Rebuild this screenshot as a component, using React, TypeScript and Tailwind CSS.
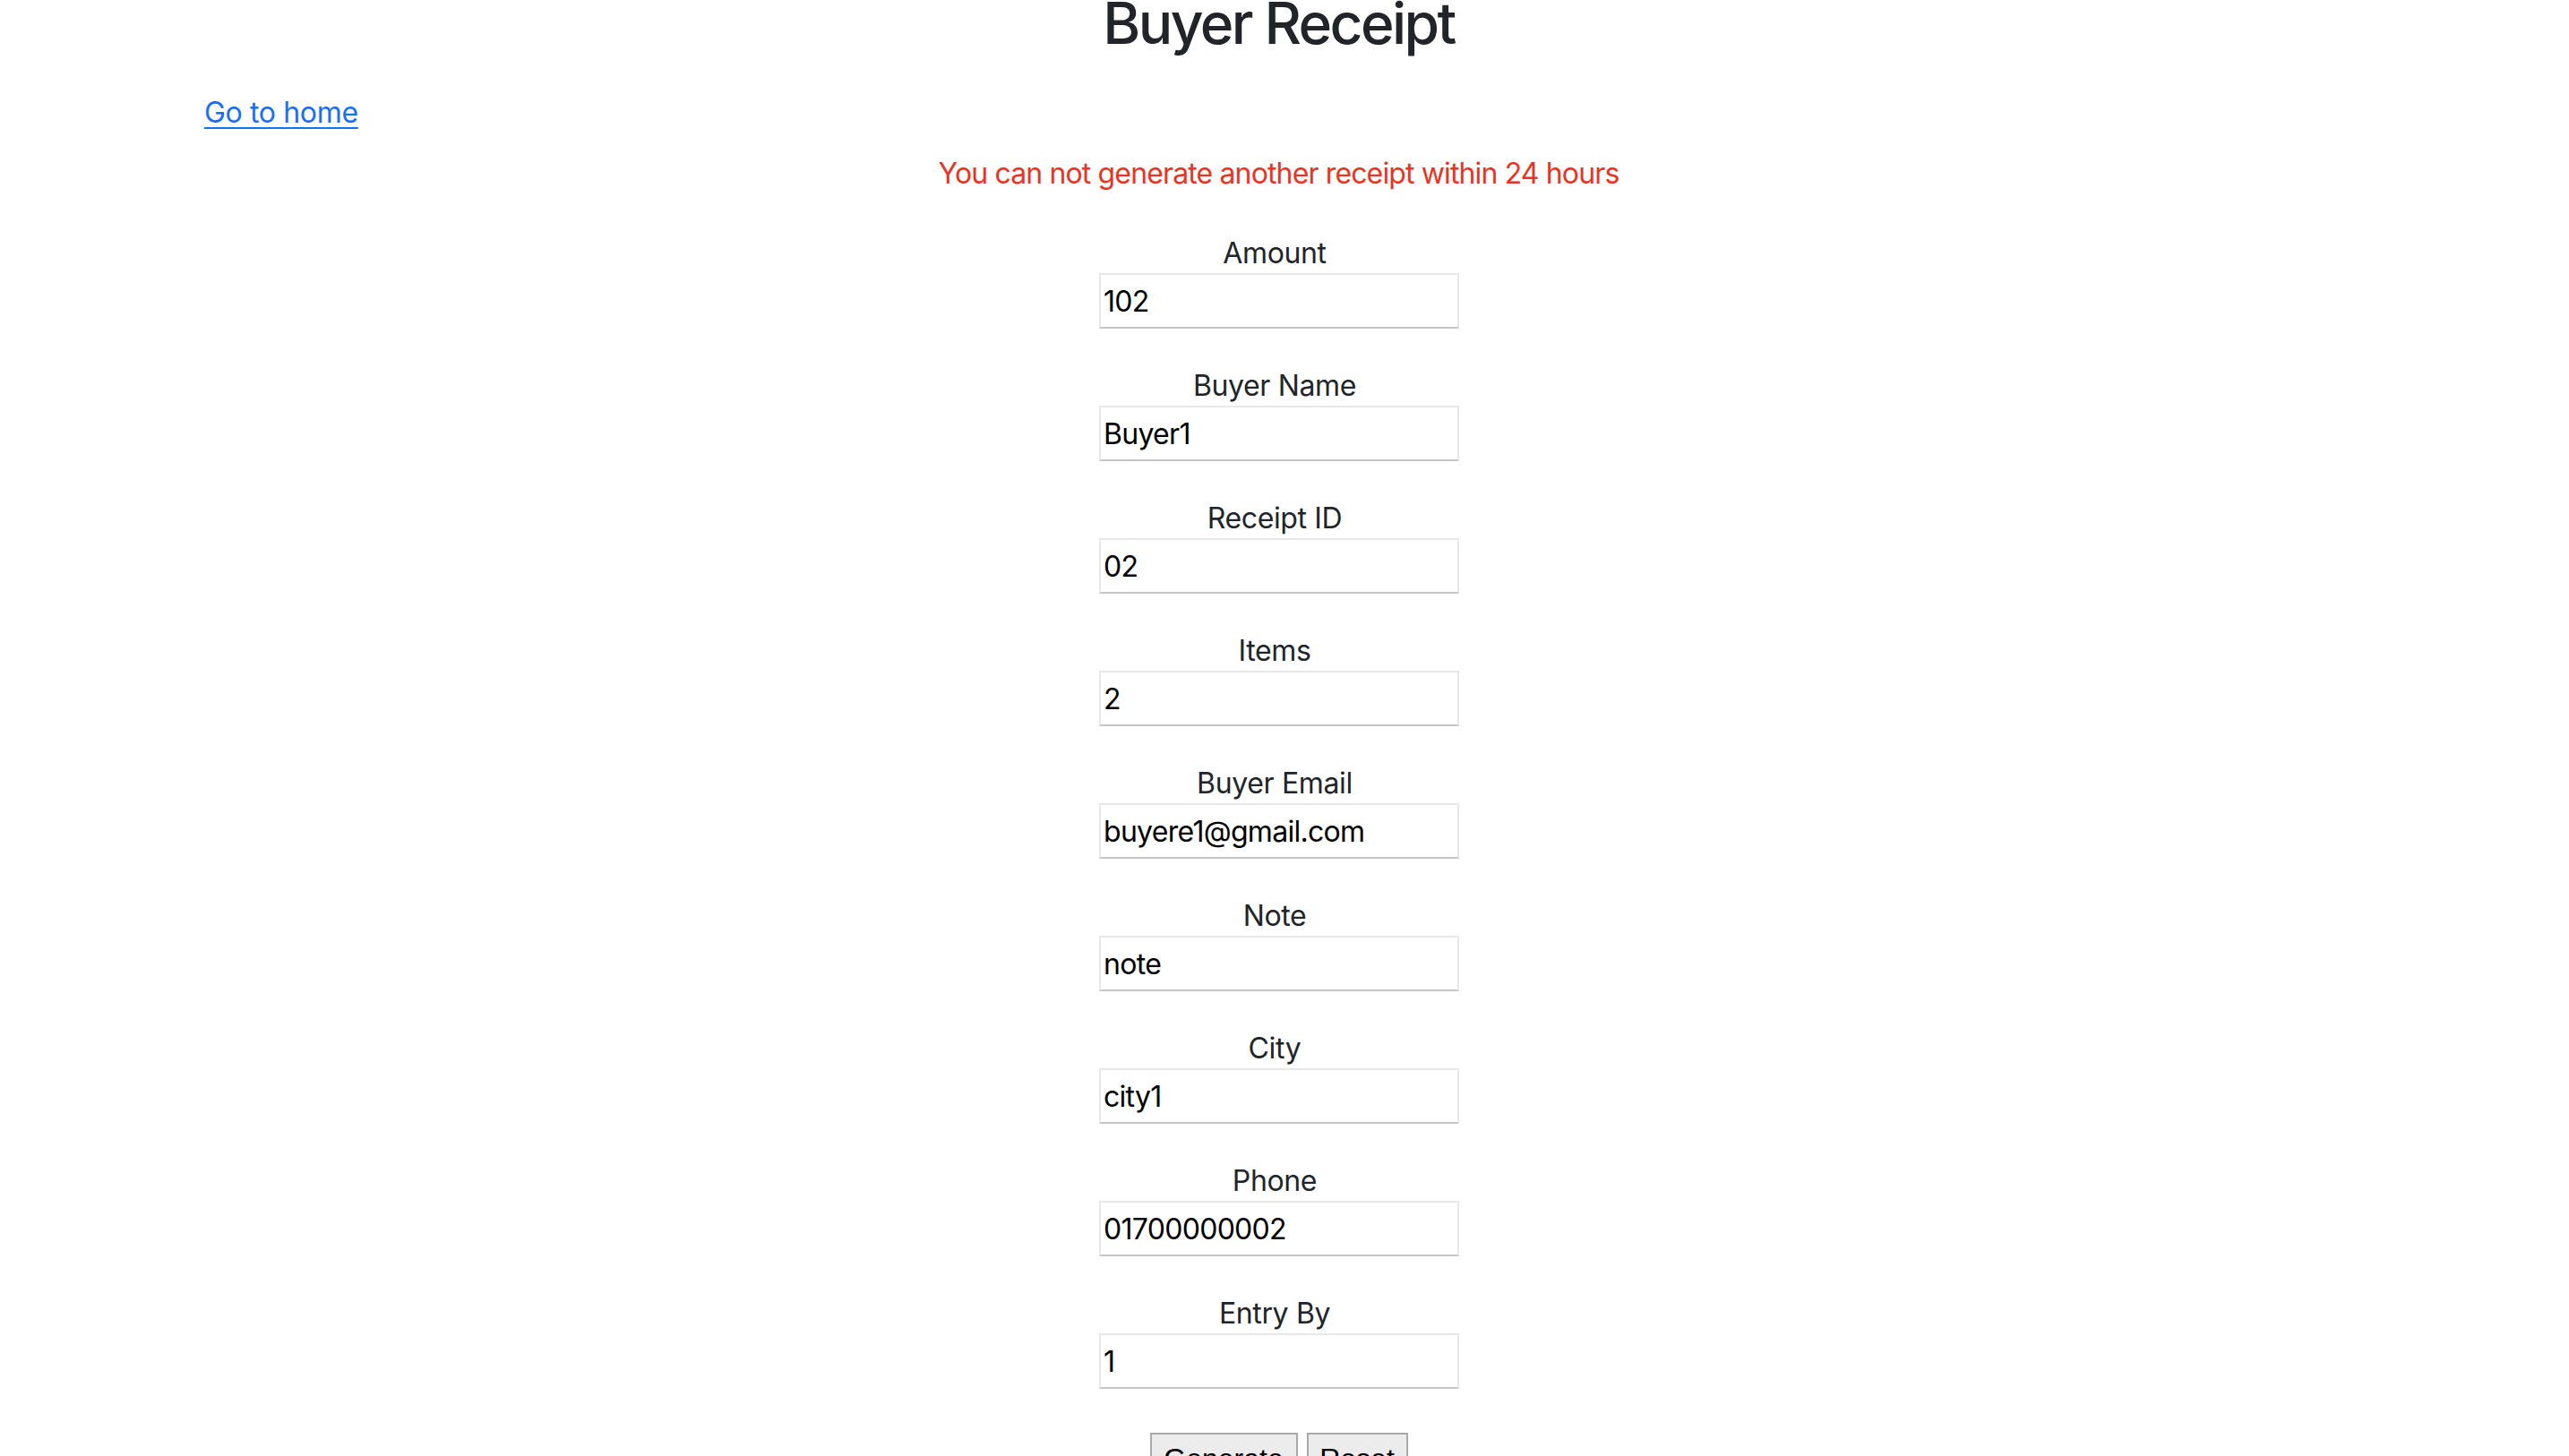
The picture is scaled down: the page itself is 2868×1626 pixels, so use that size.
const fields: { label: string; value: string }[] = [
  { label: 'Amount', value: '102' },
  { label: 'Buyer Name', value: 'Buyer1' },
  { label: 'Receipt ID', value: '02' },
  { label: 'Items', value: '2' },
  { label: 'Buyer Email', value: 'buyere1@gmail.com' },
  { label: 'Note', value: 'note' },
  { label: 'City', value: 'city1' },
  { label: 'Phone', value: '01700000002' },
  { label: 'Entry By', value: '1' },
];

export default function App() {
  return (
    <div className="h-[1626px] w-full overflow-hidden bg-white font-['Inter',sans-serif] tracking-[-0.022em] text-[#212529]">
      <div className="w-[2855px]">
        <h2 className="-mt-[13px] text-center text-[64px] font-medium leading-[77px] tracking-[-0.04em]">Buyer Receipt</h2>

        <div className="mt-[38px] pl-[228px] text-[32px] leading-[48px]">
          <a href="#" className="text-[#1a6ef5] underline decoration-2 underline-offset-[5px]">
            Go to home
          </a>
        </div>

        <p className="mt-[20px] text-center text-[32px] leading-[48px] tracking-[-0.027em] text-[#ea3323]">
          You can not generate another receipt within 24 hours
        </p>

        <form className="mt-[41px] flex flex-col items-center">
          {fields.map((f) => (
            <div key={f.label} className="mb-[40px] flex flex-col items-center">
              <label className="-mb-[2px] pr-[9px] text-[32px] leading-[48px]">{f.label}</label>
              <input
                readOnly
                value={f.value}
                className="ml-[1px] h-[62px] w-[402px] border-2 border-[#e8e8e8] border-b-[#c6c6c6] bg-white px-[3px] text-[32px] tracking-[-0.022em] text-black outline-none"
              />
            </div>
          ))}
          <div className="mt-[9px] flex gap-[10px] font-['Liberation_Sans',sans-serif] text-[32px] tracking-normal text-black">
            <button type="button" className="h-[58px] w-[165px] border-2 border-[#a9a9a9] bg-[#ececec] leading-none">
              Generate
            </button>
            <button type="button" className="h-[58px] w-[113px] border-2 border-[#a9a9a9] bg-[#ececec] leading-none">
              Reset
            </button>
          </div>
        </form>
      </div>
    </div>
  );
}
